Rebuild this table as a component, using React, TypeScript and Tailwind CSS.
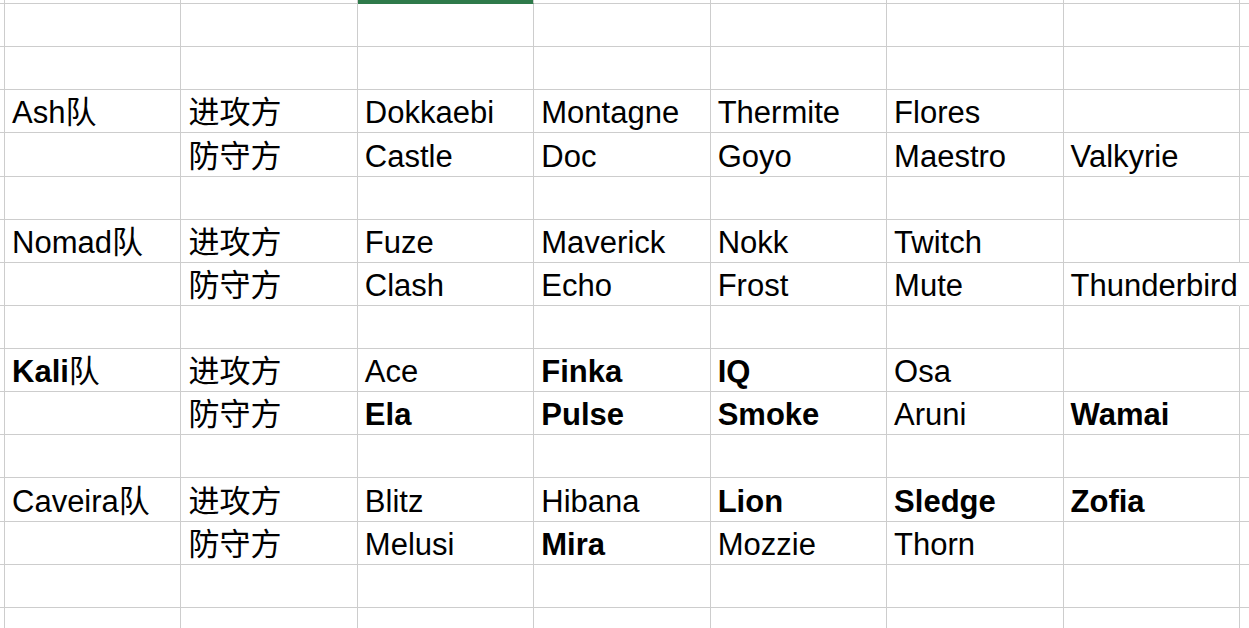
import React from 'react';

type Cell = { text?: string; bold?: boolean; suffix?: string; overflow?: boolean };

const c = (text: string, bold = false): Cell => ({ text, bold });

// each team takes 2 data rows + 1 blank row
const teams: Cell[][] = [
  [{ text: 'Ash', suffix: '队' }, c('进攻方'), c('Dokkaebi'), c('Montagne'), c('Thermite'), c('Flores'), {}],
  [{}, c('防守方'), c('Castle'), c('Doc'), c('Goyo'), c('Maestro'), c('Valkyrie')],
  [{ text: 'Nomad', suffix: '队' }, c('进攻方'), c('Fuze'), c('Maverick'), c('Nokk'), c('Twitch'), {}],
  [{}, c('防守方'), c('Clash'), c('Echo'), c('Frost'), c('Mute'), { text: 'Thunderbird', overflow: true }],
  [{ text: 'Kali', bold: true, suffix: '队' }, c('进攻方'), c('Ace'), c('Finka', true), c('IQ', true), c('Osa'), {}],
  [{}, c('防守方'), c('Ela', true), c('Pulse', true), c('Smoke', true), c('Aruni'), c('Wamai', true)],
  [{ text: 'Caveira', suffix: '队' }, c('进攻方'), c('Blitz'), c('Hibana'), c('Lion', true), c('Sledge', true), c('Zofia', true)],
  [{}, c('防守方'), c('Melusi'), c('Mira', true), c('Mozzie'), c('Thorn'), {}],
];

const empty: Cell[] = [{}, {}, {}, {}, {}, {}, {}];

const rows: Cell[][] = [
  empty,
  empty,
  teams[0], teams[1], empty,
  teams[2], teams[3], empty,
  teams[4], teams[5], empty,
  teams[6], teams[7], empty,
  empty,
];

const App: React.FC = () => {
  return (
    <div
      className="w-[1249px] h-[628px] overflow-hidden bg-white text-black"
      style={{ fontFamily: '"Liberation Sans", "Noto Sans CJK SC", sans-serif' }}
    >
      <div className="grid grid-cols-[5px_repeat(7,176.43px)_1fr] grid-rows-[4px_repeat(15,43.14px)]">
        {/* top partial row, selected column header edge */}
        <div className="border-r border-b border-[#cdcdcd]" />
        {Array.from({ length: 7 }).map((_, i) => (
          <div
            key={`h${i}`}
            className={`border-r border-b border-[#cdcdcd] ${i === 2 ? 'bg-[#2e7a4a] border-b-[#2e7a4a]' : ''}`}
          />
        ))}
        <div className="border-b border-[#cdcdcd]" />

        {rows.map((row, r) => (
          <React.Fragment key={r}>
            <div className="border-r border-b border-[#cdcdcd]" />
            {row.map((cell, i) => (
              <div
                key={i}
                className={`relative flex items-end pl-[7px] pb-[4px] border-b border-r border-[#cdcdcd] text-[31px] leading-none whitespace-nowrap ${
                  cell.overflow ? 'border-r-white overflow-visible z-10' : 'overflow-hidden'
                }`}
              >
                {cell.text && (
                  <span className={cell.overflow ? 'bg-white' : ''}>
                    <span className={cell.bold ? 'font-bold' : ''}>{cell.text}</span>
                    {cell.suffix}
                  </span>
                )}
              </div>
            ))}
            <div className="border-b border-[#cdcdcd]" />
          </React.Fragment>
        ))}
      </div>
    </div>
  );
};

export default App;
